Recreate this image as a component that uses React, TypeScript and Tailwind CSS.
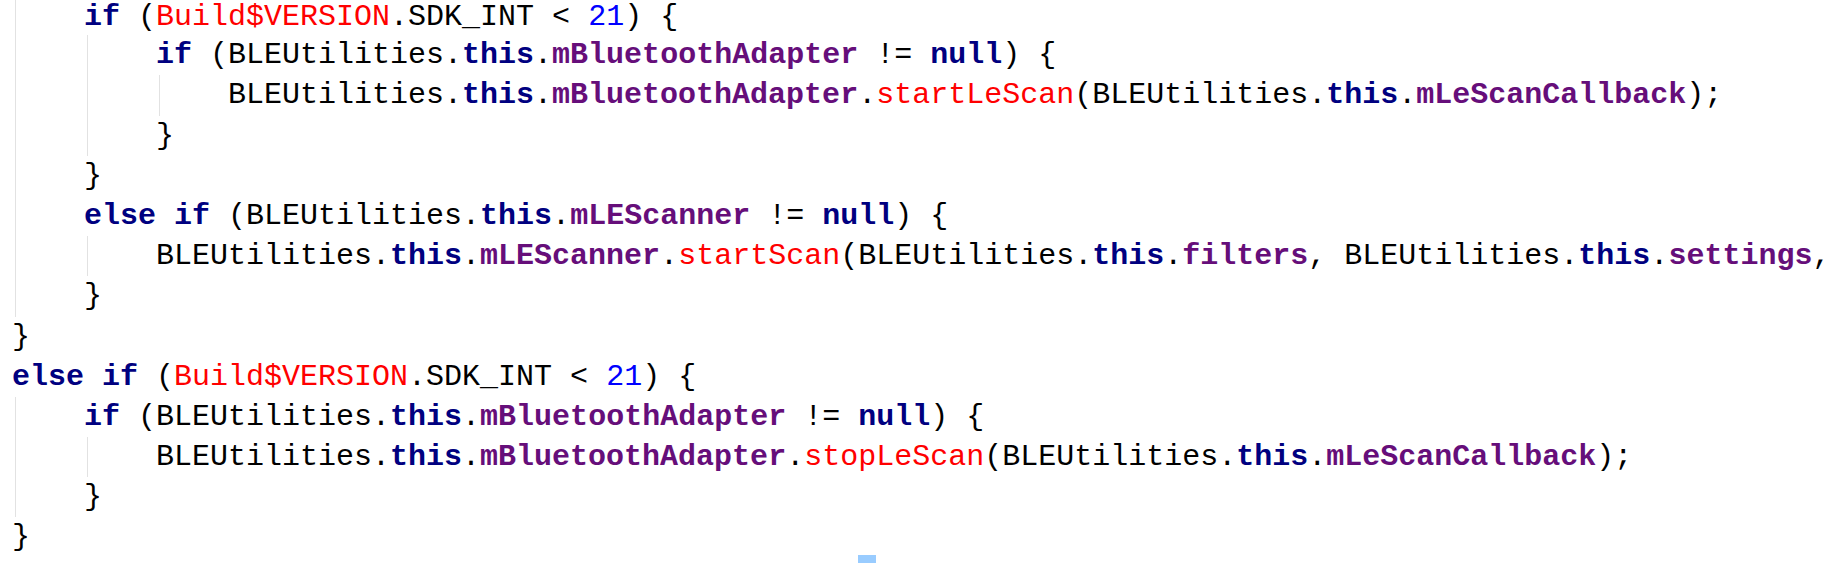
type Tok = [string, "k" | "f" | "m" | "n" | "t"];

interface Line {
  indent: number;
  guides: number[];
  toks: Tok[];
}

const colors: Record<Tok[1], string> = {
  k: "text-[#000080] font-bold",
  f: "text-[#660e7a] font-bold",
  m: "text-[#ff0000]",
  n: "text-[#0000ff]",
  t: "text-black",
};

const BLE = (field: string): Tok[] => [
  ["BLEUtilities.", "t"],
  ["this", "k"],
  [".", "t"],
  [field, "f"],
];

const lines: Line[] = [
  {
    indent: 1,
    guides: [0],
    toks: [["if", "k"], [" (", "t"], ["Build$VERSION", "m"], [".SDK_INT < ", "t"], ["21", "n"], [") {", "t"]],
  },
  {
    indent: 2,
    guides: [0, 1],
    toks: [["if", "k"], [" (", "t"], ...BLE("mBluetoothAdapter"), [" != ", "t"], ["null", "k"], [") {", "t"]],
  },
  {
    indent: 3,
    guides: [0, 1, 2],
    toks: [...BLE("mBluetoothAdapter"), [".", "t"], ["startLeScan", "m"], ["(", "t"], ...BLE("mLeScanCallback"), [");", "t"]],
  },
  { indent: 2, guides: [0, 1], toks: [["}", "t"]] },
  { indent: 1, guides: [0], toks: [["}", "t"]] },
  {
    indent: 1,
    guides: [0],
    toks: [["else if", "k"], [" (", "t"], ...BLE("mLEScanner"), [" != ", "t"], ["null", "k"], [") {", "t"]],
  },
  {
    indent: 2,
    guides: [0, 1],
    toks: [
      ...BLE("mLEScanner"),
      [".", "t"],
      ["startScan", "m"],
      ["(", "t"],
      ...BLE("filters"),
      [", ", "t"],
      ...BLE("settings"),
      [",", "t"],
    ],
  },
  { indent: 1, guides: [0], toks: [["}", "t"]] },
  { indent: 0, guides: [], toks: [["}", "t"]] },
  {
    indent: 0,
    guides: [],
    toks: [["else if", "k"], [" (", "t"], ["Build$VERSION", "m"], [".SDK_INT < ", "t"], ["21", "n"], [") {", "t"]],
  },
  {
    indent: 1,
    guides: [0],
    toks: [["if", "k"], [" (", "t"], ...BLE("mBluetoothAdapter"), [" != ", "t"], ["null", "k"], [") {", "t"]],
  },
  {
    indent: 2,
    guides: [0, 1],
    toks: [...BLE("mBluetoothAdapter"), [".", "t"], ["stopLeScan", "m"], ["(", "t"], ...BLE("mLeScanCallback"), [");", "t"]],
  },
  { indent: 1, guides: [0], toks: [["}", "t"]] },
  { indent: 0, guides: [], toks: [["}", "t"]] },
];

// first row is clipped by the top of the viewport, so it gets a shorter box
const CodeLine = ({ line, first }: { line: Line; first: boolean }) => {
  return (
    <div className={first ? "flex h-[35.2px] items-stretch" : "flex h-[40.2px] items-stretch"}>
      {Array.from({ length: line.indent }).map((_, i) => (
        <span key={i} className="flex w-[4ch] shrink-0">
          {line.guides.includes(i) && <span className="ml-[3px] w-px bg-[#e2e2e2]" />}
        </span>
      ))}
      <span className={first ? "whitespace-pre leading-[34px]" : "whitespace-pre leading-[40.2px]"}>
        {line.toks.map(([text, kind], i) => (
          <span key={i} className={colors[kind]}>
            {text}
          </span>
        ))}
      </span>
    </div>
  );
};

export default function App() {
  return (
    <div className="relative h-[563px] w-[1835px] overflow-hidden bg-white">
      <div className="pl-[12px] font-[family-name:'Liberation_Mono','Courier_New',monospace] text-[30px] text-black">
        {lines.map((line, i) => (
          <CodeLine key={i} line={line} first={i === 0} />
        ))}
      </div>
      <div className="absolute left-[858px] top-[555px] h-[8px] w-[18px] bg-[#99ccff]" />
    </div>
  );
}
